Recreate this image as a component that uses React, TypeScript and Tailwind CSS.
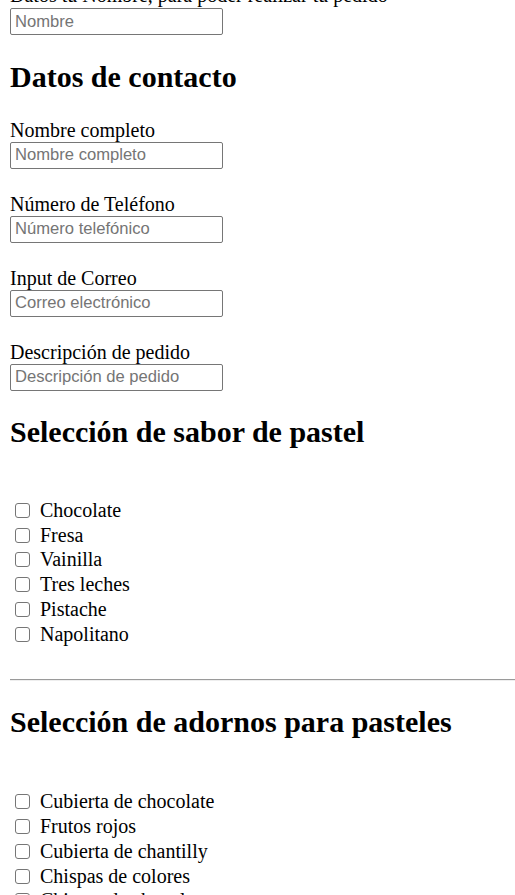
const serif = "font-['Liberation_Serif','Times_New_Roman',serif]";

const contactFields = [
  { label: "Nombre completo", placeholder: "Nombre completo" },
  { label: "Número de Teléfono", placeholder: "Número telefónico" },
  { label: "Input de Correo", placeholder: "Correo electrónico" },
  { label: "Descripción de pedido", placeholder: "Descripción de pedido" },
];

const sabores = ["Chocolate", "Fresa", "Vainilla", "Tres leches", "Pistache", "Napolitano"];

const adornos = [
  "Cubierta de chocolate",
  "Frutos rojos",
  "Cubierta de chantilly",
  "Chispas de colores",
  "Chispas de chocolate",
];

function TextInput({ placeholder }: { placeholder: string }) {
  return (
    <input
      type="text"
      placeholder={placeholder}
      className="block w-[213px] h-[27px] px-[4px] border border-[#767676] rounded-[2px] bg-white text-[16.6px] font-['Liberation_Sans',Arial,sans-serif] text-black placeholder:text-[#757575] outline-none"
    />
  );
}

function CheckRow({ text }: { text: string }) {
  return (
    <label className="flex items-center h-[24.8px] pl-[15px]">
      <span className="w-[15px] h-[15px] border border-[#767676] rounded-[3px] bg-white shrink-0" />
      <span className="ml-[10px] text-[20px] leading-[23px]">{text}</span>
    </label>
  );
}

function Heading({ children }: { children: string }) {
  return <h2 className="text-[30px] leading-[34.5px] font-bold">{children}</h2>;
}

export default function App() {
  return (
    <div className={`${serif} text-black bg-white pl-[10px] h-[895px] overflow-hidden`}>
      <div className="-mt-[16px] text-[20px] leading-[23px] whitespace-nowrap">
        Datos tu Nombre, para poder realizar tu pedido
      </div>
      <div className="mt-[1px]">
        <TextInput placeholder="Nombre" />
      </div>

      <div className="mt-[25px]">
        <Heading>Datos de contacto</Heading>
      </div>

      <div className="mt-[24px] flex flex-col gap-[24px]">
        {contactFields.map((f) => (
          <div key={f.label}>
            <div className="text-[20px] leading-[23px]">{f.label}</div>
            <TextInput placeholder={f.placeholder} />
          </div>
        ))}
      </div>

      <div className="mt-[24px]">
        <Heading>Selección de sabor de pastel</Heading>
      </div>
      <div className="mt-[26px] h-[23px]" />
      <div className="-ml-[10px]">
        {sabores.map((s) => (
          <CheckRow key={s} text={s} />
        ))}
      </div>

      <div className="mt-[32px] border-t border-[#9a9a9a] h-[2px] border-b border-b-[#eeeeee]" />

      <div className="mt-[24px]">
        <Heading>Selección de adornos para pasteles</Heading>
      </div>
      <div className="mt-[27px] h-[23px]" />
      <div className="-ml-[10px]">
        {adornos.map((a) => (
          <CheckRow key={a} text={a} />
        ))}
      </div>
    </div>
  );
}
